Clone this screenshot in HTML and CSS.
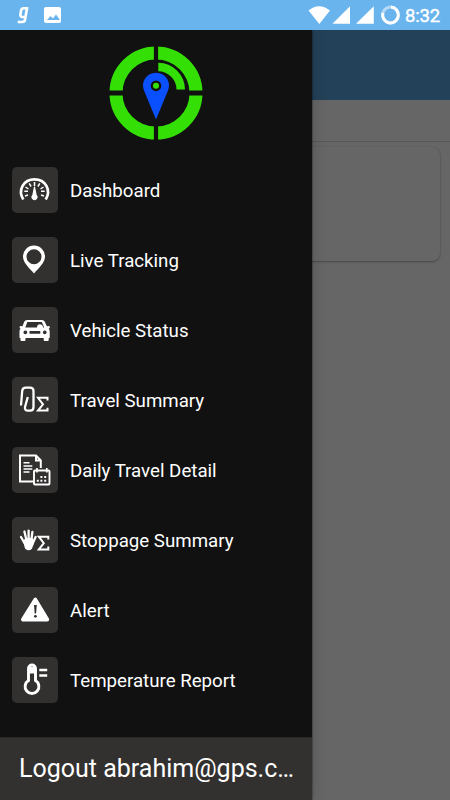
FILE: index.html
```html
<!DOCTYPE html>
<html lang="en">
<head>
<meta charset="utf-8">
<title>GPS Tracking</title>
<link rel="stylesheet" href="styles.css">
</head>
<body>
<div class="screen">
  <header class="status">
    <svg class="status-left" viewBox="0 0 50 30" fill="none" stroke="#fff">
      <path d="M28.300 8.300h-4.300q-2.600 0-3 2.400l-.6 3.600q-.3 2.700 2 2.700h3.800M27 8.300l-2 11.500q-.4 2.200-2.600 2.200h-4.700" stroke-width="2.600"/>
      <rect x="44" y="7" width="17" height="16" rx="2" fill="#fff" stroke="none"/>
      <path d="M47 20l3.500-4 2.500 2.500 3-4 4 5.500z" fill="#6ab4ee" stroke="none"/>
    </svg>
    <svg class="status-right" viewBox="305 0 100 30" fill="#fff">
      <path d="M308.500 10.500Q319 2 330 10.500L319.300 24z"/>
      <path d="M332.500 23.800H350V6.300zM356 23.800H373.800V6.300z"/>
      <circle cx="390.500" cy="15" r="7.900" fill="none" stroke="#b5daf6" stroke-width="3"/>
      <path d="M391 7.100A7.900 7.900 0 1 1 382.900 12.800" fill="none" stroke="#fff" stroke-width="3"/>
    </svg>
    <span class="clock">8:32</span>
  </header>
  <main class="page">
    <div class="toolbar"></div>
    <div class="subbar"></div>
    <div class="card"></div>
  </main>
  <aside class="drawer">
    <div class="brand">
      <svg class="logo" viewBox="-47 -47 94 94">
        <circle r="40" fill="none" stroke="#34df05" stroke-width="13"/>
        <path d="M0-47V-32M0 32V47" stroke="#111" stroke-width="4.200"/>
        <path d="M-47 0H-32M32 0H47" stroke="#111" stroke-width="5"/>
        <path d="M2.300-30.200A26.800 26.800 0 0 1 29-3.400H20.500A18.300 18.300 0 0 0 2.300-21.700z" fill="#34df05"/>
        <path d="M0 26.500L-11.600-1.500A13 13 0 1 1 11.600-1.500z" fill="#0b50ff"/>
        <circle cy="-7.200" r="4.200" fill="#34df05" stroke="#111" stroke-width="2.300"/>
      </svg>
    </div>
    <nav class="menu">
      <a class="item"><svg class="icon" viewBox="0 0 46 46">
        <path d="M11.300 32.500C5.500 23 11.500 12.300 22.500 12.300S39.500 23 33.700 32.500" fill="none" stroke="#fff" stroke-width="2.700"/>
        <path d="M22.500 15v4M17.200 16.400l1.900 3.100M27.800 16.400l-1.900 3.100M13.500 20l3 2M31.500 20l-3 2M12.300 24.300h3.700M32.700 24.300H29M13 29l3-1M32 29l-3-1" stroke="#fff" stroke-width="1.500"/>
        <path d="M22 19.500h1l1.700 8.500a3 3 0 1 1-4.400 0z" fill="#fff"/>
      </svg><span>Dashboard</span></a>
      <a class="item"><svg class="icon" viewBox="0 0 46 46">
        <path fill="#fff" fill-rule="evenodd" d="M22 36.500C18 31.500 11 26 11 19.500A11 10.900 0 0 1 33 19.500C33 26 26 31.500 22 36.500zM22 12.300a7.500 7.500 0 1 0 0 15a7.500 7.500 0 1 0 0-15z"/>
      </svg><span>Live Tracking</span></a>
      <a class="item"><svg class="icon" viewBox="0 0 46 46">
        <path fill="#fff" fill-rule="evenodd" d="M15 13h15q2 0 2.800 1.800l2 4.500 2.200-.2q1.500.9.700 2l-1 .7q1 1 1 2.500V31h-1v2q0 1-1 1h-3q-1 0-1-1v-2H13.500v2q0 1-1 1h-3q-1 0-1-1v-2h-1v-6.700q0-1.500 1-2.500l-.8-.7q-.5-1.500.7-2l2.100.2 1.700-4.500Q13 13 15 13zM15.300 15l-2 5.500H25q0-3 2.700-3.300 2.800 0 3.500 3.300h1L29.800 15zM13.300 23.500a1.900 1.900 0 1 0 .1 0zM32.700 23.500a1.900 1.900 0 1 0 .1 0zM17.500 24v2.700h10.800V24z"/>
        <path d="M26.500 20.500q.1-2 1.800-2 1.500.2 1.700 2z" fill="#fff"/>
      </svg><span>Vehicle Status</span></a>
      <a class="item"><svg class="icon" viewBox="0 0 46 46" fill="none" stroke="#fff" stroke-width="2.300">
        <path d="M9 28.500L10.200 14q.3-3.400 3.800-3.400h4q3.500 0 3.500 3.400v16q0 3.700-3.500 3.700h-2q-3.500 0-3-3.700L15.800 20"/>
        <path d="M35.500 23.500v-2.700H26l5 6.500-5 6.200h9.500v-2.700" stroke-width="2"/>
      </svg><span>Travel Summary</span></a>
      <a class="item"><svg class="icon" viewBox="0 0 46 46" fill="none" stroke="#fff">
        <path d="M21 34.600H8V8.600H24L28.800 13.500V21M24 8.600v5h5" stroke-width="2"/>
        <path d="M11.500 15.800h6M11.500 19h8.800M11.500 22h8.800M11.500 25h6" stroke-width="1.500"/>
        <rect x="22" y="23.500" width="15.500" height="14" rx="1" stroke-width="1.900"/>
        <path d="M25 21v4.500M34.800 21v4.500" stroke-width="1.700"/>
        <path d="M28.400 30h2M32.200 30h2M24.800 33.700h2M28.400 33.700h2M32.200 33.700h2" stroke-width="1.900"/>
      </svg><span>Daily Travel Detail</span></a>
      <a class="item"><svg class="icon" viewBox="0 0 46 46">
        <path d="M9 20l4 7M12.400 14.500l2.600 11M16.600 13.600v11M20.400 15l-1.300 10M23.600 20l-3.600 8" fill="none" stroke="#fff" stroke-width="2.300" stroke-linecap="round"/>
        <path d="M11.200 23.500L14 21h6.500l1.500 4.500-1.400 4.500q-.9 3.300-4 3.300t-4-3z" fill="#fff"/>
        <path d="M36.300 22.500v-2.800H26.800l5 6.500-5 6.200h9.500v-2.800" fill="none" stroke="#fff" stroke-width="2"/>
      </svg><span>Stoppage Summary</span></a>
      <a class="item"><svg class="icon" viewBox="0 0 46 46">
        <path d="M23.300 12.700L11 32.600H35.200z" fill="#fff" stroke="#fff" stroke-width="4" stroke-linejoin="round"/>
        <path d="M22 18h2.800l-.7 8.500h-1.400z" fill="#333130"/><circle cx="23.400" cy="29.300" r="1.400" fill="#333130"/>
      </svg><span>Alert</span></a>
      <a class="item"><svg class="icon" viewBox="0 0 46 46" fill="none" stroke="#fff">
        <path d="M16.500 23.600V11.500a3.500 3.500 0 0 1 7 0v12.100a6.900 6.900 0 1 1-7 0z" stroke-width="2.900"/>
        <path d="M16 10h8v6.500h-8z" fill="#fff" stroke="none"/>
        <path d="M27.300 13h7.900M27.300 18.500h7.900" stroke-width="2.700"/>
      </svg><span>Temperature Report</span></a>
    </nav>
    <div class="logout">Logout abrahim@gps.c…</div>
  </aside>
</div>
</body>
</html>
```

FILE: styles.css
```css
* { box-sizing: border-box; }
body { margin: 0; font-family: Roboto, sans-serif; }
.screen {
  position: relative;
  display: flex;
  flex-direction: column;
  width: 450px;
  height: 800px;
  overflow: hidden;
}
.status {
  display: flex;
  align-items: center;
  height: 30px;
  flex: none;
  background: #6ab4ee;
  color: #fff;
}
.status-left { width: 50px; height: 30px; overflow: visible; }
.status-right { width: 100px; height: 30px; margin-left: 255px; }
.clock { font-size: 18.5px; line-height: 30px; letter-spacing: -.2px; padding-top: 2px; -webkit-text-stroke: .4px #fff; }
.page { flex: 1; background: #666; }
.toolbar { height: 70px; background: #234158; }
.subbar { height: 42px; border-bottom: 1px solid #585858; }
.card {
  height: 114px;
  margin: 5px 10px 0;
  border-radius: 8px;
  background: #666;
  box-shadow: 0 1px 2px #484848, 0 0 1px #555;
}
.drawer {
  position: absolute;
  top: 30px;
  left: 0;
  display: flex;
  flex-direction: column;
  width: 312px;
  height: 770px;
  background: #111;
  color: #fff;
  clip-path: inset(0 -30px 0 0);
  box-shadow: 0 0 2px rgba(0, 0, 0, .7), 0 0 16px rgba(0, 0, 0, .15);
}
.brand { display: flex; justify-content: center; height: 125px; padding-top: 15.5px; }
.logo { width: 94px; height: 94px; }
.menu { flex: 1; }
.item {
  display: flex;
  align-items: center;
  gap: 12px;
  height: 70px;
  padding-left: 12px;
  font-size: 18.7px;
  line-height: 24px;
  white-space: nowrap;
}
.item span { padding-top: 1px; }
.icon { width: 46px; height: 46px; border-radius: 5px; background: #333130; }
.logout {
  height: 63px;
  padding-left: 19px;
  background: #333130;
  border-top: 1px solid #292827;
  font-size: 25px;
  line-height: 61px;
  white-space: nowrap;
}
```
